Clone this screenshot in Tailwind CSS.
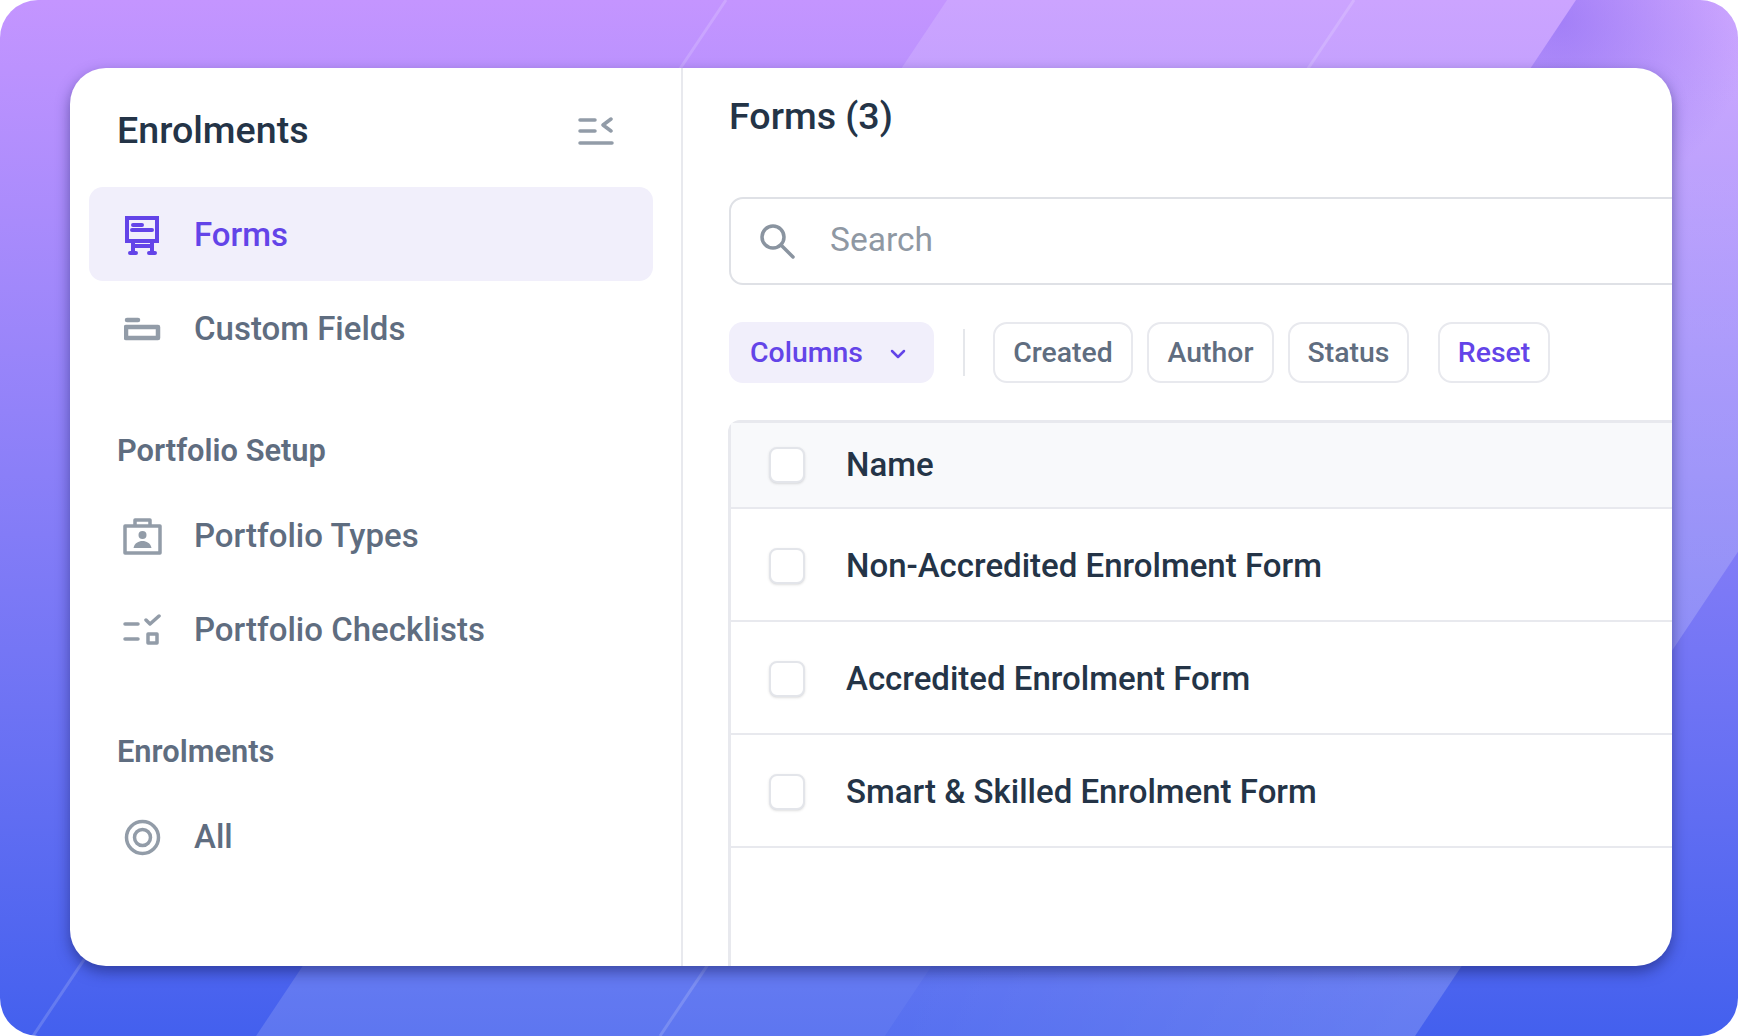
<!DOCTYPE html>
<html lang="en">
<head>
    <meta charset="UTF-8">
    <meta name="viewport" content="width=device-width, initial-scale=1.0">
    <script src="https://cdn.jsdelivr.net/npm/@tailwindcss/browser@4"></script>
    <title>Enrolments</title>
</head>
<body class="bg-white font-['Roboto',sans-serif]">
    <div class="relative w-[1738px] h-[1036px] overflow-hidden rounded-[38px] bg-gradient-to-b from-[#c495ff] to-[#4360ee] pt-[68px] pl-[70px]">
        <!-- Background bands -->
        <svg class="absolute left-0 top-0" width="1738" height="1036" viewBox="0 0 1738 1036">
            <defs>
                <radialGradient id="bandShade" cx="1560" cy="20" r="190" gradientUnits="userSpaceOnUse">
                    <stop offset="0" stop-color="#7a58f0" stop-opacity="0.5"/>
                    <stop offset="1" stop-color="#7a58f0" stop-opacity="0"/>
                </radialGradient>
                <linearGradient id="bandTwo" x1="885" y1="1036" x2="1415" y2="1036" gradientUnits="userSpaceOnUse">
                    <stop offset="0" stop-color="#ffffff" stop-opacity="0.1"/>
                    <stop offset="1" stop-color="#ffffff" stop-opacity="0.18"/>
                </linearGradient>
            </defs>
            <polygon points="947,0 1576,0 885,1036 256,1036" fill="#ffffff" fill-opacity="0.14"/>
            <polygon points="1576,0 2106,0 1415,1036 885,1036" fill="url(#bandTwo)"/>
            <polygon points="1576,0 2106,0 1415,1036 885,1036" fill="url(#bandShade)"/>
            <line x1="726" y1="0" x2="33" y2="1036" stroke="#ffffff" stroke-opacity="0.16" stroke-width="3"/>
            <line x1="1354" y1="0" x2="660" y2="1036" stroke="#ffffff" stroke-opacity="0.16" stroke-width="3"/>
        </svg>

        <!-- Card -->
        <div class="relative flex w-[1602px] h-[898px] overflow-hidden rounded-[36px] bg-white shadow-[0_6px_14px_rgba(20,25,90,0.5)]">
            <!-- Sidebar -->
            <aside class="w-[613px] shrink-0 border-r-2 border-[#e8e9ee] pl-[19px] pr-[28px]">
                <div class="flex h-[119px] items-center justify-between pl-[28px] pr-[39px] pt-[6px]">
                    <h1 class="text-[37.6px] font-medium text-[#243447]">Enrolments</h1>
                    <svg class="mt-[3px]" width="36" height="30" viewBox="0 0 36 30" fill="none" stroke="#929ca8" stroke-width="3.5" stroke-linecap="round" stroke-linejoin="round">
                        <path d="M2 3h15M2 14h15M2 26h32M33 2l-8 6 8 6"/>
                    </svg>
                </div>

                <a class="flex h-[94px] items-center rounded-[14px] bg-[#f1effb] pl-[35px] pt-[2px]">
                    <svg class="w-[37px] shrink-0" width="37" height="40" viewBox="0 0 37 40" fill="none" stroke="#6344e8" stroke-width="4" stroke-linecap="round">
                        <path d="M3 3h30v23H3zM9 10h9M8 15h20M9 26v12M28 26v12M9 31h19"/>
                        <path d="M6 38h6M25 38h6"/>
                    </svg>
                    <span class="ml-[33px] text-[33px] font-medium text-[#6344e8]">Forms</span>
                </a>
                <a class="flex h-[94px] items-center pl-[35px] pt-[2px]">
                    <svg class="w-[37px] shrink-0" width="37" height="24" viewBox="0 0 37 24" fill="none" stroke="#929ca8" stroke-width="4.5" stroke-linecap="round" stroke-linejoin="round">
                        <path d="M3 3h11"/>
                        <path d="M2 10h32v11H2z"/>
                    </svg>
                    <span class="ml-[33px] text-[33px] font-medium text-[#5f6d80]">Custom Fields</span>
                </a>

                <h2 class="pl-[28px] pt-[56px] pb-[17px] text-[30.8px] leading-[40px] font-semibold text-[#5f6d80]">Portfolio Setup</h2>
                <a class="flex h-[94px] items-center pl-[33px] pt-[2px]">
                    <svg class="w-[41px] shrink-0" width="41" height="38" viewBox="0 0 41 38" fill="none" stroke="#929ca8" stroke-width="3.5" stroke-linecap="round" stroke-linejoin="round">
                        <path d="M3 9h35v27H3zM13 9V3h15v6"/>
                        <circle cx="20.5" cy="18" r="4" fill="#929ca8" stroke="none"/>
                        <path d="M11.5 31c1-5 5-7 9-7s8 2 9 7z" fill="#929ca8" stroke="none"/>
                    </svg>
                    <span class="ml-[31px] text-[33px] font-medium text-[#5f6d80]">Portfolio Types</span>
                </a>
                <a class="flex h-[94px] items-center pl-[33px] pt-[2px]">
                    <svg class="w-[41px] shrink-0" width="41" height="32" viewBox="0 0 41 32" fill="none" stroke="#929ca8" stroke-width="3.5" stroke-linecap="round" stroke-linejoin="round">
                        <path d="M3 10h13M3 25h13M24 6l4 4 9-8"/>
                        <path d="M26 20h9v9h-9z"/>
                    </svg>
                    <span class="ml-[31px] text-[33px] font-medium text-[#5f6d80]">Portfolio Checklists</span>
                </a>

                <h2 class="pl-[28px] pt-[56px] pb-[18px] text-[30.8px] leading-[40px] font-semibold text-[#5f6d80]">Enrolments</h2>
                <a class="flex h-[94px] items-center pl-[35px]">
                    <svg class="w-[37px] shrink-0" width="37" height="37" viewBox="0 0 37 37" fill="none" stroke="#929ca8" stroke-width="3.5">
                        <circle cx="18.5" cy="18.5" r="16"/>
                        <circle cx="18.5" cy="18.5" r="8"/>
                    </svg>
                    <span class="ml-[33px] text-[33px] font-medium text-[#5f6d80]">All</span>
                </a>
            </aside>

            <!-- Main -->
            <main class="flex min-w-0 flex-1 flex-col pl-[46px]">
                <h2 class="pt-[28px] text-[37.6px] leading-[40px] font-medium text-[#243447]">Forms (3)</h2>

                <div class="mt-[61px] flex h-[88px] w-[1100px] shrink-0 items-center rounded-[14px] border-2 border-[#dfe1e6] pl-[27px]">
                    <svg width="38" height="38" viewBox="0 0 38 38" fill="none" stroke="#8a94a0" stroke-width="3.5" stroke-linecap="round">
                        <circle cx="15" cy="15" r="11"/>
                        <path d="M23 23l12 12"/>
                    </svg>
                    <span class="ml-[34px] pb-[1px] text-[33.5px] text-[#8f98a3]">Search</span>
                </div>

                <div class="mt-[37px] flex h-[61px] shrink-0 items-center text-[28.4px] font-medium">
                    <button class="flex h-full w-[205px] items-center rounded-[14px] bg-[#f1effb] pl-[21px] pt-[2px] text-[#6344e8]">
                        Columns
                        <svg class="ml-[27px]" width="16" height="10" viewBox="0 0 16 10" fill="none" stroke="#6344e8" stroke-width="2.5" stroke-linecap="round" stroke-linejoin="round">
                            <path d="M2 2l6 6 6-6"/>
                        </svg>
                    </button>
                    <div class="ml-[29px] mr-[28px] h-[47px] w-[2px] bg-[#e5e7eb]"></div>
                    <button class="h-full w-[140px] rounded-[14px] border-2 border-[#e8e9ee] pt-[2px] text-[#5f6d80]">Created</button>
                    <button class="ml-[14px] h-full w-[127px] rounded-[14px] border-2 border-[#e8e9ee] pt-[2px] text-[#5f6d80]">Author</button>
                    <button class="ml-[14px] h-full w-[121px] rounded-[14px] border-2 border-[#e8e9ee] pt-[2px] text-[#5f6d80]">Status</button>
                    <button class="ml-[29px] h-full w-[112px] rounded-[14px] border-2 border-[#e8e9ee] pt-[2px] text-[#6344e8]">Reset</button>
                </div>

                <!-- Table -->
                <div class="mt-[37px] ml-[-1px] w-[1100px] flex-1 rounded-tl-[12px] border-t-[3px] border-l-[3px] border-[#e8e9ee] text-[33px] font-medium text-[#243447]">
                    <div class="flex h-[86px] items-center border-b-2 border-[#e8e9ee] bg-[#f8f9fb] pl-[38px]">
                        <span class="h-[36px] w-[36px] shrink-0 rounded-[8px] border-2 border-[#e3e5ea] bg-white shadow-sm"></span>
                        <span class="ml-[41px]">Name</span>
                    </div>
                    <div class="flex h-[113px] items-center border-b-2 border-[#e8e9ee] pl-[38px] pt-[2px]">
                        <span class="h-[36px] w-[36px] shrink-0 rounded-[8px] border-2 border-[#e3e5ea] bg-white shadow-sm"></span>
                        <span class="ml-[41px]">Non-Accredited Enrolment Form</span>
                    </div>
                    <div class="flex h-[113px] items-center border-b-2 border-[#e8e9ee] pl-[38px] pt-[2px]">
                        <span class="h-[36px] w-[36px] shrink-0 rounded-[8px] border-2 border-[#e3e5ea] bg-white shadow-sm"></span>
                        <span class="ml-[41px]">Accredited Enrolment Form</span>
                    </div>
                    <div class="flex h-[113px] items-center border-b-2 border-[#e8e9ee] pl-[38px] pt-[2px]">
                        <span class="h-[36px] w-[36px] shrink-0 rounded-[8px] border-2 border-[#e3e5ea] bg-white shadow-sm"></span>
                        <span class="ml-[41px]">Smart &amp; Skilled Enrolment Form</span>
                    </div>
                </div>
            </main>
        </div>
    </div>
</body>
</html>
